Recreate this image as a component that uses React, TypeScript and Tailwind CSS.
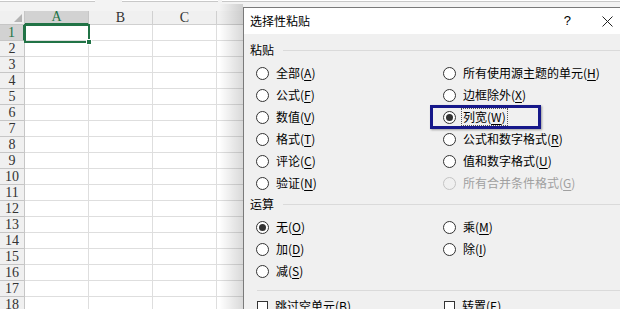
import React from "react";

const cols = ["A", "B", "C", "D", "E", "F"];
const rows = Array.from({ length: 18 }, (_, i) => i + 1);

function Radio({ checked = false, disabled = false }: { checked?: boolean; disabled?: boolean }) {
  return (
    <span
      className={`flex h-[13px] w-[13px] shrink-0 items-center justify-center rounded-full border ${
        disabled ? "border-[#c4c4c4] bg-[#f0f0f0]" : "border-[#333333] bg-white"
      }`}
    >
      {checked && <span className="h-[7px] w-[7px] rounded-full bg-[#333333]" />}
    </span>
  );
}

function Label({ text, k, disabled = false }: { text: string; k: string; disabled?: boolean }) {
  return (
    <span className={disabled ? "text-[#a0a0a0]" : "text-black"}>
      {text}(<span className="underline underline-offset-2">{k}</span>)
    </span>
  );
}

function RadioRow({
  text,
  k,
  checked = false,
  disabled = false,
  focus = false,
  highlight = false,
}: {
  text: string;
  k: string;
  checked?: boolean;
  disabled?: boolean;
  focus?: boolean;
  highlight?: boolean;
}) {
  return (
    <div className="relative flex h-[22px] items-center">
      {highlight && (
        <div className="absolute left-[-13px] top-[-1px] h-[24px] w-[111px] border-[3px] border-[#16188a] shadow-[1px_1px_2px_rgba(0,0,0,0.35)]" />
      )}
      <Radio checked={checked} disabled={disabled} />
      <span
        className={`ml-[5px] leading-[16px] ${
          focus ? "border border-dotted border-[#555] px-[1px]" : "border border-transparent px-[1px]"
        }`}
      >
        <Label text={text} k={k} disabled={disabled} />
      </span>
    </div>
  );
}

function SectionHeader({ title }: { title: string }) {
  return (
    <div className="flex h-[16px] items-center pl-[6px]">
      <span className="leading-[16px]">{title}</span>
      <div className="ml-[9px] h-px flex-1 bg-[#dadada]" />
    </div>
  );
}

function Checkbox({ text, k }: { text: string; k: string }) {
  return (
    <div className="flex h-[22px] items-center">
      <span className="h-[11px] w-[11px] shrink-0 border border-[#333333] bg-white" />
      <span className="ml-[7px] leading-[16px]">
        <Label text={text} k={k} />
      </span>
    </div>
  );
}

export default function App() {
  return (
    <div className="relative h-[309px] w-[620px] overflow-hidden bg-white font-['Noto_Sans_CJK_SC',sans-serif] text-[12px]">
      {/* top strip (formula bar remnants) */}
      <div className="flex h-[11px] items-start bg-[#f3f3f3]">
        <div className="h-[2px] w-[95px] border-b border-[#c8c8c8] bg-white" />
        <div className="ml-[27px] h-[2px] w-[96px] border-b border-[#c8c8c8] bg-white" />
        <div className="ml-[4px] h-[2px] flex-1 border-b border-[#c8c8c8] bg-white" />
      </div>

      {/* column headers */}
      <div className="flex h-[14px] font-['Liberation_Serif',serif] text-[14px] leading-[14px] text-[#333]">
        <div className="relative w-[25px] shrink-0 border-b border-r border-[#c6c6c6] bg-[#f0f0f0]">
          <svg className="absolute bottom-[2px] right-[2px]" width="8" height="8" viewBox="0 0 8 8">
            <polygon points="8,0 8,8 0,8" fill="#b4b4b4" />
          </svg>
        </div>
        {cols.map((c, i) => (
          <div
            key={c}
            className={`flex w-[64px] shrink-0 items-center justify-center border-r ${
              c === "A"
                ? "border-b-2 border-b-[#217346] border-r-[#c6c6c6] bg-[#d2d2d2] text-[#217346]"
                : "border-b border-[#d0d0d0] bg-[#f0f0f0]"
            }`}
          >
            {i < 3 ? c : ""}
          </div>
        ))}
      </div>

      {/* rows */}
      {rows.map((r) => (
        <div key={r} className="flex h-[16px]">
          <div
            className={`flex w-[25px] shrink-0 items-center justify-center border-b font-['Liberation_Serif',serif] text-[14px] leading-[14px] ${
              r === 1
                ? "border-r-2 border-b-[#c6c6c6] border-r-[#217346] bg-[#d2d2d2] text-[#217346]"
                : "border-r border-[#c6c6c6] bg-[#f0f0f0] text-[#333]"
            }`}
          >
            {r}
          </div>
          {cols.map((c) => (
            <div key={c} className="w-[64px] shrink-0 border-b border-r border-[#dedede]" />
          ))}
        </div>
      ))}

      {/* selected cell A1 */}
      <div className="absolute left-[24px] top-[24px] h-[19px] w-[66px] border-2 border-[#217346]" />
      <div className="absolute left-[86px] top-[39px] h-[6px] w-[6px] border border-white bg-[#217346]" />

      {/* dialog shadow */}
      <div className="absolute bottom-0 left-[219px] top-[4px] w-[24px] bg-gradient-to-r from-transparent to-black/15" />

      {/* dialog */}
      <div className="absolute bottom-[-20px] left-[243px] right-[-4px] top-[7px] flex flex-col border border-[#7a7a7a] bg-[#f0f0f0]">
        <div className="flex h-[26px] shrink-0 items-center bg-white pl-[6px]">
          <span className="leading-[16px]">选择性粘贴</span>
          <span className="ml-auto mr-[31px] font-['Liberation_Sans',sans-serif] text-[13px]">?</span>
          <svg className="mr-[10px]" width="11" height="11" viewBox="0 0 11 11">
            <path d="M0.5 0.5 L10.5 10.5 M10.5 0.5 L0.5 10.5" stroke="#222" strokeWidth="1" />
          </svg>
        </div>

        <div className="flex flex-col pt-[8px]">
          <SectionHeader title="粘贴" />
          <div className="mt-[4px] grid grid-cols-[187px_1fr] pl-[12px]">
            <div className="flex flex-col">
              <RadioRow text="全部" k="A" />
              <RadioRow text="公式" k="F" />
              <RadioRow text="数值" k="V" />
              <RadioRow text="格式" k="T" />
              <RadioRow text="评论" k="C" />
              <RadioRow text="验证" k="N" />
            </div>
            <div className="flex flex-col">
              <RadioRow text="所有使用源主题的单元" k="H" />
              <RadioRow text="边框除外" k="X" />
              <RadioRow text="列宽" k="W" checked focus highlight />
              <RadioRow text="公式和数字格式" k="R" />
              <RadioRow text="值和数字格式" k="U" />
              <RadioRow text="所有合并条件格式" k="G" disabled />
            </div>
          </div>

          <div className="mt-[2px]">
            <SectionHeader title="运算" />
          </div>
          <div className="mt-[4px] grid grid-cols-[187px_1fr] pl-[12px]">
            <div className="flex flex-col">
              <RadioRow text="无" k="O" checked />
              <RadioRow text="加" k="D" />
              <RadioRow text="减" k="S" />
            </div>
            <div className="flex flex-col">
              <RadioRow text="乘" k="M" />
              <RadioRow text="除" k="I" />
            </div>
          </div>

          <div className="ml-[13px] mt-[8px] h-px bg-[#dadada]" />

          <div className="mt-[4px] grid grid-cols-[187px_1fr] pl-[13px]">
            <Checkbox text="跳过空单元" k="B" />
            <Checkbox text="转置" k="E" />
          </div>
        </div>
      </div>
    </div>
  );
}
